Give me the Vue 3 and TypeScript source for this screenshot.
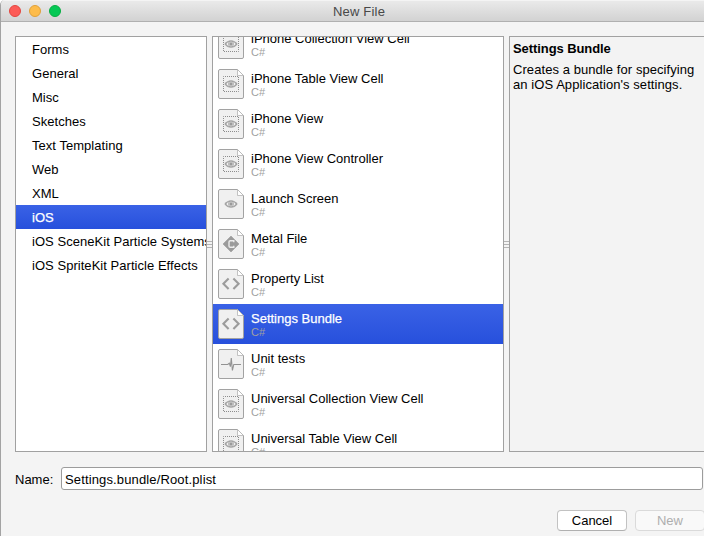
<script setup lang="ts">
type IconKind = 'view' | 'eye' | 'metal' | 'code' | 'pulse'

interface Template {
  name: string
  icon: IconKind
}

const categories: string[] = [
  'Forms',
  'General',
  'Misc',
  'Sketches',
  'Text Templating',
  'Web',
  'XML',
  'iOS',
  'iOS SceneKit Particle Systems',
  'iOS SpriteKit Particle Effects',
]

const templates: Template[] = [
  { name: 'iPhone Collection View Cell', icon: 'view' },
  { name: 'iPhone Table View Cell', icon: 'view' },
  { name: 'iPhone View', icon: 'view' },
  { name: 'iPhone View Controller', icon: 'view' },
  { name: 'Launch Screen', icon: 'eye' },
  { name: 'Metal File', icon: 'metal' },
  { name: 'Property List', icon: 'code' },
  { name: 'Settings Bundle', icon: 'code' },
  { name: 'Unit tests', icon: 'pulse' },
  { name: 'Universal Collection View Cell', icon: 'view' },
  { name: 'Universal Table View Cell', icon: 'view' },
]

const selectedCategory = 'iOS'
const selectedTemplate = 'Settings Bundle'
</script>

<template>
  <div class="window">
    <header class="titlebar">
      <div class="lights">
        <span class="light close"></span>
        <span class="light minimize"></span>
        <span class="light zoom"></span>
      </div>
      <h1 class="title">New File</h1>
    </header>

    <main class="panes">
      <ul class="pane categories">
        <li
          v-for="c in categories"
          :key="c"
          class="category"
          :class="{ selected: c === selectedCategory }"
        >{{ c }}</li>
      </ul>
      <div class="splitter"><i></i><i></i><i></i></div>
      <div class="pane templates">
        <ul class="scroller">
          <li
            v-for="t in templates"
            :key="t.name"
            class="template"
            :class="{ selected: t.name === selectedTemplate }"
          >
            <svg class="icon" viewBox="0 0 26 30" width="26" height="30">
              <path d="M2 .5H19.5L25.5 6.5V28Q25.5 29.5 24 29.5H2Q.5 29.5 .5 28V2Q.5 .5 2 .5Z" fill="#f0f0f0" stroke="#a2a2a2" />
              <path d="M19.5 .5V6.5H25.5Z" fill="#fff" stroke="#b4b4b4" stroke-width=".8" />
              <rect v-if="t.icon === 'view'" x="5.5" y="7.5" width="15" height="15" fill="none" stroke="#8c8c8c" stroke-dasharray="1 1" stroke-dashoffset=".5" />
              <g v-if="t.icon === 'view' || t.icon === 'eye'">
                <path d="M6.3 15C8.4 12.3 10.5 11.2 13 11.2S17.6 12.3 19.7 15C17.6 17.7 15.5 18.8 13 18.8S8.4 17.7 6.3 15Z" fill="#a3a3a3" />
                <path d="M8.3 15Q9.6 13.2 11.2 12.6A3.2 3.2 0 0 0 11.2 17.4Q9.6 16.8 8.3 15ZM17.7 15Q16.4 13.2 14.8 12.6A3.2 3.2 0 0 1 14.8 17.4Q16.4 16.8 17.7 15Z" fill="#f0f0f0" />
                <circle cx="13" cy="15" r="2" fill="#9a9a9a" stroke="#dadada" stroke-width=".8" />
              </g>
              <g v-else-if="t.icon === 'metal'">
                <path d="M13 7L21 15L13 23L5 15Z" fill="#9b9b9b" stroke="#9b9b9b" stroke-width=".6" stroke-linejoin="round" />
                <path d="M15.8 13.3V11.7H12.3Q11 11.7 11 13V17Q11 18.3 12.3 18.3H15.8V16.7" fill="none" stroke="#ececec" stroke-width="1.4" />
              </g>
              <path v-else-if="t.icon === 'code'" d="M10.6 9.5L5.4 14.8L10.6 20.1M15.4 9.5L20.6 14.8L15.4 20.1" fill="none" stroke="#9c9c9c" stroke-width="2.1" />
              <path v-else d="M3 15.5H9.8L11.3 14.2L12.4 17.6L13.3 9L14.4 21.5L15.8 15.5H23" fill="none" stroke="#929292" stroke-width="1.1" />
            </svg>
            <div class="label">
              <span class="name">{{ t.name }}</span>
              <span class="language">C#</span>
            </div>
          </li>
        </ul>
      </div>
      <div class="splitter"><i></i><i></i><i></i></div>
      <section class="pane details">
        <h2>Settings Bundle</h2>
        <p>Creates a bundle for specifying<br />an iOS Application's settings.</p>
      </section>
    </main>

    <div class="name-row">
      <label for="file-name">Name:</label>
      <input id="file-name" type="text" value="Settings.bundle/Root.plist" />
    </div>

    <footer class="actions">
      <button type="button">Cancel</button>
      <button type="button" disabled>New</button>
    </footer>
  </div>
</template>

<style>
body {
  overflow: hidden;
}
</style>

<style scoped>
* {
  box-sizing: border-box;
  margin: 0;
  padding: 0;
}
.window {
  width: 704px;
  height: 536px;
  overflow: hidden;
  display: flex;
  flex-direction: column;
  background: #f4f4f4;
  border-left: 1px solid #a3a3a3;
  border-top-left-radius: 5px;
  font: 13px/16px "Liberation Sans", Arial, sans-serif;
  color: #000;
}
.titlebar {
  flex: none;
  display: flex;
  align-items: center;
  height: 22px;
  padding-left: 8px;
  background: linear-gradient(#ebebeb, #d2d2d2);
  border-bottom: 1px solid #b0b0b0;
  box-shadow: inset 0 1px #f4f4f4;
}
.lights {
  display: flex;
  gap: 8px;
  width: 52px;
}
.light {
  width: 12px;
  height: 12px;
  border-radius: 50%;
}
.close {
  background: #fc5b57;
  border: 1px solid #e2463f;
}
.minimize {
  background: #fdbc4b;
  border: 1px solid #dfa03a;
}
.zoom {
  background: #05c855;
  border: 1px solid #07ad42;
}
.title {
  flex: 1;
  padding: 2px 47px 0 0;
  font-size: 13px;
  font-weight: 400;
  letter-spacing: 0.2px;
  text-align: center;
  color: #484848;
}
.panes {
  flex: none;
  display: flex;
  height: 416px;
  margin: 14px 0 0 14px;
}
.pane {
  flex: none;
  overflow: hidden;
  border: 1px solid #a1a1a1;
  background: #fff;
}
.categories {
  width: 192px;
  list-style: none;
}
.category {
  height: 24px;
  padding: 5px 0 0 16px;
  letter-spacing: 0.04px;
  white-space: nowrap;
}
.selected {
  background: linear-gradient(#3a62e6, #2750dc);
  color: #fff;
  -webkit-text-stroke: 0.25px #fff;
}
.splitter {
  flex: none;
  width: 5px;
  display: flex;
  flex-direction: column;
  justify-content: center;
  gap: 2px;
}
.splitter i {
  height: 1px;
  background: #b4b4b4;
}
.templates {
  width: 292px;
}
.scroller {
  margin-top: -13px;
  list-style: none;
}
.template {
  display: flex;
  height: 40px;
  padding: 5px 0 0 5px;
  gap: 7px;
}
.icon {
  flex: none;
}
.label {
  display: flex;
  flex-direction: column;
  padding-top: 2px;
  white-space: nowrap;
}
.language {
  font-size: 11px;
  line-height: 11px;
  color: #a0a0a0;
  -webkit-text-stroke: 0;
}
.details {
  width: 200px;
  padding: 4px 3px;
  background: #f3f3f3;
}
.details h2 {
  font-size: 13px;
  line-height: 16px;
  letter-spacing: -0.08px;
}
.details p {
  margin-top: 5px;
  line-height: 15px;
  letter-spacing: 0.07px;
  white-space: nowrap;
}
.name-row {
  flex: none;
  display: flex;
  align-items: center;
  margin: 15px 1px 0 14px;
}
.name-row label {
  width: 46px;
  padding-top: 2px;
}
.name-row input {
  flex: 1;
  height: 23px;
  padding: 1px 3px 0;
  border: 1px solid #9c9c9c;
  border-radius: 3px;
  outline: none;
  background: #fff;
  font: inherit;
  letter-spacing: 0.14px;
  color: inherit;
}
.actions {
  display: flex;
  gap: 8px;
  margin: 20px 0 0 556px;
}
.actions button {
  flex: none;
  width: 70px;
  height: 21px;
  border: 1px solid #c2c2c2;
  border-bottom-color: #b0b0b0;
  border-radius: 4px;
  background: #fff;
  font: inherit;
  color: #000;
}
.actions button:disabled {
  border-color: #dadada;
  background: #f9f9f9;
  color: #aeaeae;
}
</style>
